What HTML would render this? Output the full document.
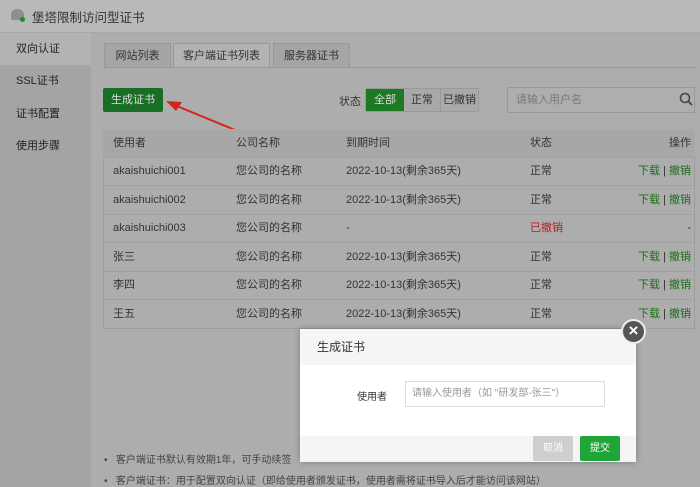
<!DOCTYPE html>
<html><head><meta charset="utf-8"><style>
*{margin:0;padding:0;box-sizing:border-box}
body{width:700px;height:487px;overflow:hidden;background:#adadad;font-family:"Liberation Sans","Noto Sans CJK SC",sans-serif;font-size:11px;color:#333;position:relative}
.a{position:absolute}
.top{left:0;top:0;width:700px;height:33px;background:#b9b9b9;border-bottom:1px solid #a8a8a8}
.side{left:0;top:33px;width:91px;height:454px;background:#a4a4a4}
.si{position:absolute;left:0;width:91px;height:32px;line-height:32px;padding-left:16px;font-size:11px;color:#222}
.tab{top:43px;height:25px;line-height:24px;text-align:center;border:1px solid #999;background:#a5a5a5;font-size:11px;color:#333}
.row{left:103px;width:592px;height:29px;border-bottom:1px solid #a0a0a0;line-height:28px}
.row span{position:absolute;top:0}
.g{color:#1c6d1c;font-weight:normal}
</style></head><body>
<div class="a top"></div>
<div class="a" style="left:11px;top:9px;width:13px;height:11px;border-radius:6px 6px 2px 2px;background:#8e8e8e"></div>
<div class="a" style="left:20px;top:17px;width:5px;height:5px;border-radius:3px;background:#1e8f2e"></div>
<div class="a" style="left:32px;top:7px;font-size:12.5px;color:#333">堡塔限制访问型证书</div>
<div class="a side"></div>
<div class="si" style="top:33px;background:#b3b3b3">双向认证</div>
<div class="si" style="top:65px">SSL证书</div>
<div class="si" style="top:98px">证书配置</div>
<div class="si" style="top:130px">使用步骤</div>
<div class="a tab" style="left:104px;width:67px">网站列表</div>
<div class="a tab" style="left:173px;width:97px;background:#b3b3b3;border-bottom-color:#b3b3b3">客户端证书列表</div>
<div class="a tab" style="left:273px;width:77px">服务器证书</div>
<div class="a" style="left:103px;top:67px;width:592px;height:1px;background:#999"></div>
<div class="a" style="left:103px;top:88px;width:60px;height:24px;background:#186e24;color:#ddd;line-height:24px;text-align:center;border-radius:2px">生成证书</div>
<svg class="a" style="left:160px;top:95px" width="80" height="40"><line x1="75" y1="35" x2="12" y2="9" stroke="#d4241c" stroke-width="2"/><polygon points="6,6 22,7 16,16" fill="#d4241c"/></svg>
<div class="a" style="left:339px;top:93px">状态</div>
<div class="a" style="left:365px;top:88px;width:114px;height:24px;border:1px solid #999;border-radius:2px;background:#a9a9a9"></div>
<div class="a" style="left:366px;top:89px;width:38px;height:22px;background:#1c7a25;color:#ddd;line-height:22px;text-align:center">全部</div>
<div class="a" style="left:404px;top:89px;width:37px;height:22px;line-height:22px;text-align:center;border-right:1px solid #999">正常</div>
<div class="a" style="left:441px;top:89px;width:37px;height:22px;line-height:22px;text-align:center">已撤销</div>
<div class="a" style="left:507px;top:87px;width:188px;height:26px;border:1px solid #999;background:#aeaeae;line-height:24px;padding-left:8px;color:#777">请输入用户名</div>
<svg class="a" style="left:679px;top:92px" width="14" height="14"><circle cx="6" cy="6" r="4.5" fill="none" stroke="#444" stroke-width="1.6"/><line x1="9.5" y1="9.5" x2="13" y2="13" stroke="#444" stroke-width="1.8"/></svg>
<div class="a" style="left:103px;top:129px;width:592px;height:200px;border:1px solid #9c9c9c;border-top:none"></div>
<div class="a row" style="top:129px;background:#a7a7a7"><span style="left:10px">使用者</span><span style="left:133px">公司名称</span><span style="left:243px">到期时间</span><span style="left:427px">状态</span><span style="right:4px">操作</span></div>
<div class="a row" style="top:157px"><span style="left:10px">akaishuichi001</span><span style="left:133px">您公司的名称</span><span style="left:243px">2022-10-13(剩余365天)</span><span style="left:427px">正常</span><span style="right:4px"><b class="g">下载</b> | <b class="g">撤销</b></span></div>
<div class="a row" style="top:186px"><span style="left:10px">akaishuichi002</span><span style="left:133px">您公司的名称</span><span style="left:243px">2022-10-13(剩余365天)</span><span style="left:427px">正常</span><span style="right:4px"><b class="g">下载</b> | <b class="g">撤销</b></span></div>
<div class="a row" style="top:214px"><span style="left:10px">akaishuichi003</span><span style="left:133px">您公司的名称</span><span style="left:243px">-</span><span style="left:427px;color:#b52020">已撤销</span><span style="right:4px">-</span></div>
<div class="a row" style="top:243px"><span style="left:10px">张三</span><span style="left:133px">您公司的名称</span><span style="left:243px">2022-10-13(剩余365天)</span><span style="left:427px">正常</span><span style="right:4px"><b class="g">下载</b> | <b class="g">撤销</b></span></div>
<div class="a row" style="top:271px"><span style="left:10px">李四</span><span style="left:133px">您公司的名称</span><span style="left:243px">2022-10-13(剩余365天)</span><span style="left:427px">正常</span><span style="right:4px"><b class="g">下载</b> | <b class="g">撤销</b></span></div>
<div class="a row" style="top:300px;border-bottom:none"><span style="left:10px">王五</span><span style="left:133px">您公司的名称</span><span style="left:243px">2022-10-13(剩余365天)</span><span style="left:427px">正常</span><span style="right:4px"><b class="g">下载</b> | <b class="g">撤销</b></span></div>
<div class="a" style="left:104px;top:451px;font-size:10px;color:#444">•&nbsp;&nbsp;&nbsp;客户端证书默认有效期1年，可手动续签</div>
<div class="a" style="left:104px;top:472px;font-size:10px;color:#444">•&nbsp;&nbsp;&nbsp;客户端证书：用于配置双向认证（即给使用者颁发证书，使用者需将证书导入后才能访问该网站）</div>
<div class="a" style="left:300px;top:329px;width:336px;height:133px;background:#fff;box-shadow:0 0 6px rgba(0,0,0,.3)">
<div style="height:36px;background:#f5f5f5;line-height:36px;padding-left:17px;font-size:12px;color:#333">生成证书</div>
<div class="a" style="left:57px;top:59px;font-size:10px">使用者</div>
<div class="a" style="left:105px;top:52px;width:200px;height:26px;border:1px solid #ddd;line-height:24px;padding-left:6px;font-size:10px;color:#999">请输入使用者（如 "研发部-张三"）</div>
<div class="a" style="left:0;top:107px;width:336px;height:26px;background:#f5f5f5"></div>
<div class="a" style="left:233px;top:107px;width:40px;height:25px;background:#cfcfcf;color:#fff;text-align:center;line-height:25px;font-size:10px;border-radius:2px">取消</div>
<div class="a" style="left:280px;top:107px;width:40px;height:25px;background:#20a53a;color:#fff;text-align:center;line-height:25px;font-size:10px;border-radius:2px">提交</div>
</div>
<div class="a" style="left:621px;top:319px;width:25px;height:25px;border-radius:50%;background:#555;border:2px solid #eee;color:#fff;text-align:center;line-height:20px;font-size:17px;font-weight:bold">×</div>
</body></html>
